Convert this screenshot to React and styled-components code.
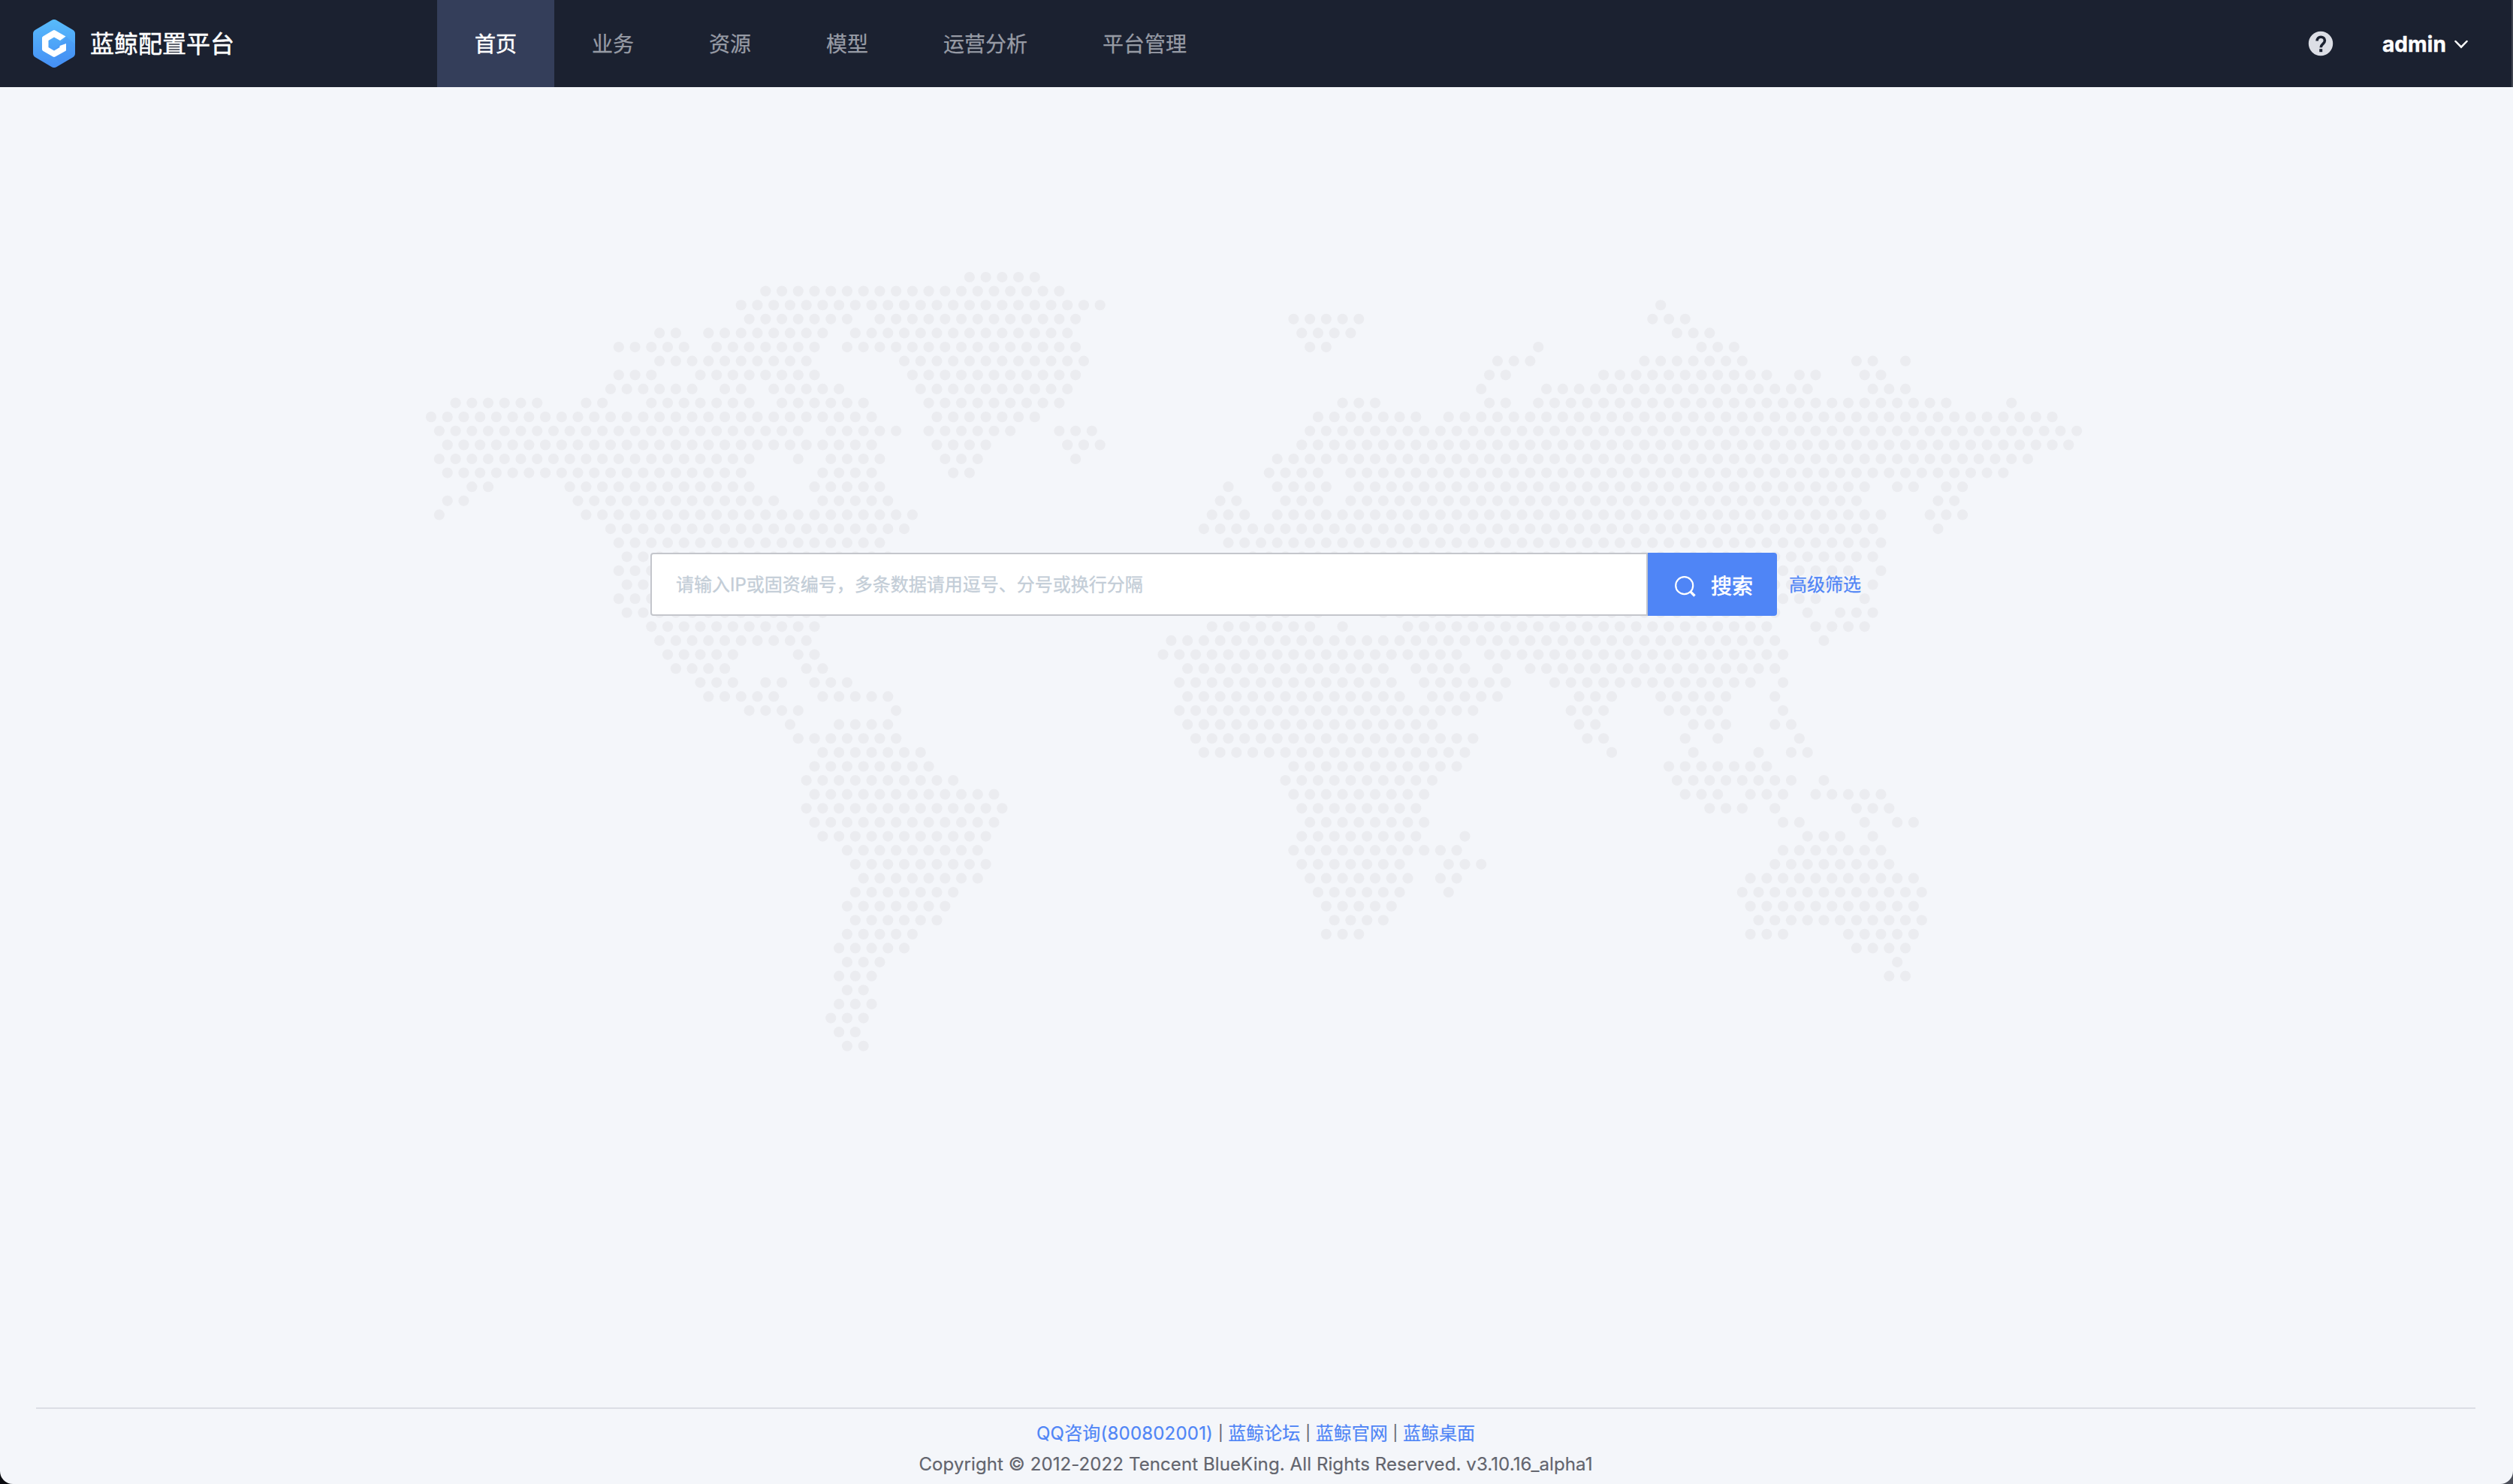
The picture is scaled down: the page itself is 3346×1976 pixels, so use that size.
import React from "react";
import styled, { createGlobalStyle } from "styled-components";

const GlobalStyle = createGlobalStyle`
  html, body { margin: 0; padding: 0; }
  body {
    background: linear-gradient(90deg, #0a0b10, #4a4d58);
    font-family: Inter, "Noto Sans CJK SC", sans-serif;
    color: #63656e;
  }
  * { box-sizing: border-box; }
`;

const Page = styled.div`
  display: flex;
  flex-direction: column;
  width: 3346px;
  height: 1976px;
  overflow: hidden;
  background: #f4f6fa;
  border-radius: 0 0 17px 17px;
`;

const Header = styled.header`
  display: flex;
  align-items: center;
  flex: none;
  height: 116px;
  background: #1b2130;
  border-right: 2px solid #40444f;
`;

const Brand = styled.div`
  display: flex;
  align-items: center;
  width: 582px;
  padding-left: 44px;
`;

const BrandName = styled.span`
  margin-left: 20px;
  padding-top: 2px;
  font-size: 32px;
  line-height: 48px;
  color: #fff;
  -webkit-text-stroke: 0.5px currentColor;
`;

const Nav = styled.nav`
  display: flex;
  height: 100%;
`;

const NavItem = styled.a`
  display: flex;
  align-items: center;
  padding: 0 50px 2px;
  font-size: 28px;
  color: ${(p) => (p.$active ? "#fff" : "#979ba5")};
  background: ${(p) => (p.$active ? "#343e5a" : "transparent")};
  -webkit-text-stroke: ${(p) => (p.$active ? "0.5px" : "0.25px")} currentColor;
`;

const Tools = styled.div`
  display: flex;
  align-items: center;
  margin-left: auto;
  padding-right: 58px;
`;

const User = styled.div`
  display: flex;
  align-items: center;
  margin-left: 65px;
  padding-top: 2px;
  color: #fff;
  font-size: 28px;
  font-weight: 700;
`;

const UserName = styled.span`
  width: 86px;
  margin-right: 10px;
  letter-spacing: 0.1px;
  white-space: nowrap;
  -webkit-text-stroke: 0.4px currentColor;
`;

const Main = styled.main`
  flex: 1;
  display: grid;
  grid-template-columns: 100%;
  grid-template-rows: 1fr;
`;

const MapLayer = styled.svg`
  grid-area: 1 / 1;
  display: block;
  width: 3346px;
  height: 1400px;
`;

const SearchRow = styled.form`
  grid-area: 1 / 1;
  align-self: start;
  z-index: 1;
  display: flex;
  align-items: center;
  margin: 620px 0 0 866px;
`;

const SearchInput = styled.input`
  width: 1328px;
  height: 84px;
  padding: 0 32px;
  border: 2px solid #c4c6cc;
  border-radius: 4px 0 0 4px;
  background: #fff;
  font: 24px Inter, "Noto Sans CJK SC", sans-serif;
  outline: none;
  &::placeholder {
    color: #c3cdd7;
    opacity: 1;
    -webkit-text-stroke: 0.3px currentColor;
  }
`;

const SearchButton = styled.button`
  display: flex;
  align-items: center;
  width: 172px;
  height: 84px;
  padding: 5px 0 0 35px;
  border: 0;
  border-radius: 0 4px 4px 0;
  background: #4f85f6;
  color: #fff;
  font: 28px Inter, "Noto Sans CJK SC", sans-serif;
`;

const ButtonLabel = styled.span`
  margin: -3px 0 0 19px;
  -webkit-text-stroke: 0.6px currentColor;
`;

const Advanced = styled.a`
  margin-left: 16px;
  padding-bottom: 3px;
  font-size: 24px;
  color: #4f85f6;
  -webkit-text-stroke: 0.25px currentColor;
`;

const Footer = styled.footer`
  flex: none;
  height: 102px;
  margin: 0 50px 0 48px;
  padding-top: 12px;
  border-top: 2px solid #dcdee5;
  font-size: 24px;
`;

const FooterLine = styled.div`
  display: flex;
  justify-content: center;
  align-items: center;
  height: 41px;
  line-height: 41px;
  letter-spacing: ${(p) => p.$tracking || "0"};
  white-space: pre;
  -webkit-text-stroke: 0.2px currentColor;
`;

const FooterLink = styled.a`
  color: #4f85f6;
  letter-spacing: ${(p) => p.$tracking || "0"};
`;

const Divider = styled.span`
  width: 20.3px;
  padding-bottom: 1px;
  font-size: 20px;
  text-align: center;
`;

/* Each row lists [first, last] runs of dots, counted in half-pitch columns. */
const WEST = [
  [[66, 74]],
  [[41, 77]],
  [[38, 82]],
  [[39, 51], [55, 79]],
  [[28, 30], [34, 48], [52, 78]],
  [[23, 31], [35, 47], [51, 79]],
  [[28, 46], [58, 80]],
  [[23, 27], [33, 47], [59, 79]],
  [[22, 32], [36, 38], [42, 50], [60, 78]],
  [[3, 13], [19, 21], [27, 39], [43, 53], [61, 77]],
  [[0, 54], [62, 74]],
  [[1, 45], [49, 57], [61, 71], [77, 81]],
  [[2, 54], [62, 68], [78, 82]],
  [[1, 39], [45, 45], [49, 55], [63, 67], [79, 79]],
  [[2, 38], [48, 54], [64, 66]],
  [[5, 7], [17, 39], [47, 55]],
  [[2, 4], [18, 42], [48, 56]],
  [[1, 1], [19, 59]],
  [[22, 58]],
  [[23, 55]],
  [[24, 56]],
  [[23, 53]],
  [[24, 54]],
  [[23, 51]],
  [[24, 48]],
  [[27, 47]],
  [[28, 46]],
  [[29, 37], [45, 47]],
  [[30, 36], [46, 48]],
  [[33, 37], [41, 43], [47, 51]],
  [[34, 42], [48, 56]],
  [[39, 45], [57, 57]],
  [[44, 44], [50, 56]],
  [[45, 57]],
  [[48, 60]],
  [[47, 61]],
  [[46, 64]],
  [[47, 69]],
  [[46, 70]],
  [[47, 69]],
  [[48, 68]],
  [[51, 67]],
  [[52, 68]],
  [[53, 67]],
  [[52, 64]],
  [[51, 63]],
  [[52, 62]],
  [[51, 59]],
  [[50, 58]],
  [[51, 55]],
  [[50, 54]],
  [[51, 53]],
  [[50, 54]],
  [[49, 53]],
  [[50, 52]],
  [[51, 53]],
];

const EAST = [
  [],
  [],
  [[151, 151]],
  [[106, 114], [150, 154]],
  [[107, 113], [153, 157]],
  [[108, 110], [136, 136], [156, 160]],
  [[131, 135], [149, 161], [175, 177], [181, 181]],
  [[130, 132], [144, 164], [168, 170], [176, 178]],
  [[129, 129], [137, 169], [177, 181]],
  [[112, 116], [130, 132], [136, 186], [194, 194]],
  [[109, 121], [125, 199]],
  [[108, 202]],
  [[107, 201]],
  [[104, 196]],
  [[103, 109], [113, 193]],
  [[98, 98], [104, 110], [114, 176], [180, 182], [186, 188]],
  [[97, 99], [105, 109], [113, 175], [185, 187]],
  [[96, 100], [104, 178], [184, 188]],
  [[95, 177], [185, 185]],
  [[98, 178]],
  [[101, 177]],
  [[100, 174], [178, 178]],
  [[101, 173], [177, 177]],
  [[100, 170], [176, 176]],
  [[101, 105], [109, 109], [117, 165], [169, 169], [173, 177]],
  [[96, 108], [112, 112], [120, 164], [170, 176]],
  [[91, 165], [171, 171]],
  [[90, 126], [130, 166]],
  [[93, 117], [121, 127], [131, 131], [135, 165]],
  [[92, 118], [122, 132], [138, 162], [166, 166]],
  [[93, 119], [123, 131], [141, 145], [151, 159], [165, 165]],
  [[92, 128], [140, 144], [152, 158], [166, 166]],
  [[93, 123], [141, 143], [155, 159], [165, 167]],
  [[94, 128], [142, 144], [154, 154], [158, 158], [168, 168]],
  [[95, 127], [145, 145], [155, 155], [163, 163], [167, 169]],
  [[106, 126], [152, 164]],
  [[105, 123], [153, 167], [171, 171]],
  [[106, 122], [154, 158], [162, 166], [170, 178]],
  [[107, 121], [157, 161], [165, 165], [175, 179]],
  [[108, 122], [166, 168], [176, 176], [180, 182]],
  [[107, 121], [127, 127], [169, 173], [177, 177]],
  [[106, 126], [166, 178]],
  [[107, 119], [125, 129], [165, 179]],
  [[108, 120], [124, 126], [162, 182]],
  [[109, 119], [125, 125], [161, 183]],
  [[110, 118], [162, 182]],
  [[111, 117], [163, 183]],
  [[110, 114], [162, 166], [174, 182]],
  [[175, 181]],
  [[180, 180]],
  [[179, 181]],
];

const STEP_X = 10.862;
const STEP_Y = 18.614;
const TOP = 253;

const dots = (rows, left) =>
  rows.flatMap((runs, r) =>
    runs.flatMap(([a, b]) => {
      const out = [];
      for (let h = a; h <= b; h += 2) {
        out.push(
          <circle key={`${left}-${r}-${h}`} cx={left + h * STEP_X} cy={TOP + r * STEP_Y} r="7.1" />
        );
      }
      return out;
    })
  );

const WorldMap = () => (
  <MapLayer viewBox="0 0 3346 1400" fill="#ebecf0">
    {dots(WEST, 574)}
    {dots(EAST, 571)}
  </MapLayer>
);

const Logo = () => (
  <svg width="56" height="64" viewBox="0 0 56 64">
    <defs>
      <linearGradient id="logoFill" x1="0" y1="0" x2="0" y2="1">
        <stop offset="0" stopColor="#58bbfb" />
        <stop offset="1" stopColor="#458ff5" />
      </linearGradient>
    </defs>
    <path
      d="M25 .8a6 6 0 0 1 6 0l22 12.9a6 6 0 0 1 3 5.2v26.2a6 6 0 0 1-3 5.2L31 63.2a6 6 0 0 1-6 0L3 50.3a6 6 0 0 1-3-5.2V18.9a6 6 0 0 1 3-5.2z"
      fill="url(#logoFill)"
    />
    <path d="M44 23L56 33v12a6 6 0 0 1-3 5.2L38 59 24 47z" fill="#3f86ee" opacity=".25" />
    <path
      d="M26.500 14.500Q28 13.600 29.500 14.500L43.500 22.500 36 28 28 23.500 20.500 28V37L28 41.500 35.500 37V35L44 32V40.500Q44 41.500 43 42L29.500 49.500Q28 50.400 26.500 49.500L13.500 42Q12 41.200 12 39.500V24.500Q12 23 13.500 22.200Z"
      fill="#fff"
    />
  </svg>
);

const HelpIcon = () => (
  <svg width="34" height="34" viewBox="0 0 34 34">
    <circle cx="17" cy="17" r="16.200" fill="#dcdee5" />
    <path
      d="M12.100 13.600C12.100 10.600 14.200 8.200 17.200 8.200s5.200 2 5.200 4.800c0 2.300-1.300 3.300-2.700 4.600-1.500 1.300-2.500 2.200-2.500 4.700"
      fill="none"
      stroke="#1b2130"
      strokeWidth="3.600"
    />
    <rect x="15.200" y="24.200" width="4" height="4" fill="#1b2130" />
  </svg>
);

const Chevron = () => (
  <svg width="18" height="12" viewBox="0 0 18 12">
    <path d="M1.500 2L9 9.700 16.500 2" fill="none" stroke="#fff" strokeWidth="2.500" strokeLinecap="round" />
  </svg>
);

const SearchIcon = () => (
  <svg width="30" height="30" viewBox="0 0 30 30">
    <circle cx="13.700" cy="13.700" r="11.500" fill="none" stroke="#fff" strokeWidth="2.200" />
    <path d="M21.600 21.600L27.500 27.500" stroke="#fff" strokeWidth="3.400" />
  </svg>
);

const NAV = ["首页", "业务", "资源", "模型", "运营分析", "平台管理"];
const LINKS = ["QQ咨询(800802001)", "蓝鲸论坛", "蓝鲸官网", "蓝鲸桌面"];

export default function App() {
  return (
    <>
      <GlobalStyle />
      <Page>
        <Header>
          <Brand>
            <Logo />
            <BrandName>蓝鲸配置平台</BrandName>
          </Brand>
          <Nav>
            {NAV.map((label, i) => (
              <NavItem key={label} $active={i === 0}>
                {label}
              </NavItem>
            ))}
          </Nav>
          <Tools>
            <HelpIcon />
            <User>
              <UserName>admin</UserName>
              <Chevron />
            </User>
          </Tools>
        </Header>
        <Main>
          <WorldMap />
          <SearchRow>
            <SearchInput placeholder="请输入IP或固资编号，多条数据请用逗号、分号或换行分隔" />
            <SearchButton type="button">
              <SearchIcon />
              <ButtonLabel>搜索</ButtonLabel>
            </SearchButton>
            <Advanced>高级筛选</Advanced>
          </SearchRow>
        </Main>
        <Footer>
          <FooterLine>
            {LINKS.map((label, i) => (
              <React.Fragment key={label}>
                {i > 0 && <Divider>|</Divider>}
                <FooterLink $tracking={i === 0 ? "0.2px" : "0"}>{label}</FooterLink>
              </React.Fragment>
            ))}
          </FooterLine>
          <FooterLine $tracking="0.1px">
            Copyright © 2012-2022 Tencent BlueKing. All Rights Reserved. v3.10.16_alpha1
          </FooterLine>
        </Footer>
      </Page>
    </>
  );
}
